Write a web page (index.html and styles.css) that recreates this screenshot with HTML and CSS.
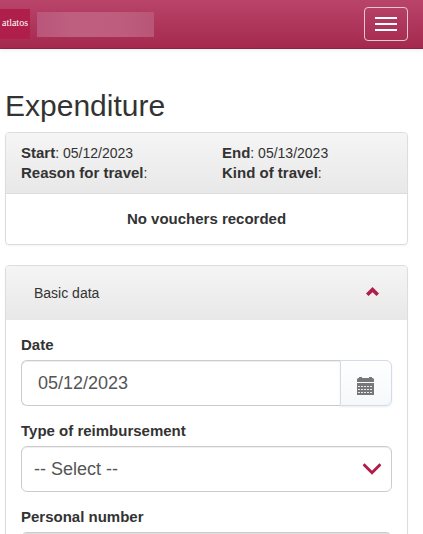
FILE: index.html
```html
<!DOCTYPE html>
<html lang="en">
<head>
<meta charset="utf-8">
<meta name="viewport" content="width=device-width, initial-scale=1">
<title>Expenditure</title>
<link rel="stylesheet" href="styles.css">
</head>
<body>
<header class="navbar">
  <a class="brand" href="#">atlatos</a>
  <span class="client"></span>
  <button class="toggle" type="button" aria-label="Menu"><span class="bar"></span><span class="bar"></span><span class="bar"></span></button>
</header>
<main class="content">
  <h1 class="title">Expenditure</h1>
  <section class="panel">
    <div class="panel-head summary">
      <div><strong>Start</strong>: 05/12/2023</div>
      <div><strong>End</strong>: 05/13/2023</div>
      <div><strong>Reason for travel</strong>:</div>
      <div><strong>Kind of travel</strong>:</div>
    </div>
    <p class="empty">No vouchers recorded</p>
  </section>
  <section class="panel">
    <button class="panel-head collapse" type="button">
      <span>Basic data</span>
      <svg class="chevron-up" viewBox="0 0 14 12" aria-hidden="true"><path d="M0 6.500 6.500 0 13 6.500 10.500 9 6.500 5.200 2.500 9z"/></svg>
    </button>
    <form class="form">
      <div class="field">
        <label for="date">Date</label>
        <div class="input-group">
          <input class="control date" id="date" type="text" value="05/12/2023">
          <button class="addon" type="button" aria-label="Choose date">
            <svg class="calendar" viewBox="0 0 17 18" aria-hidden="true">
              <path d="M0 5V2.500Q0 1 1.500 1H2V0h3v1h7V0h3v1h.5Q17 1 17 2.500V5zM0 6h17v12H0z"/>
              <path class="grid" d="M1 9.500h15M1 12.500h15M1 15.500h15"/>
            </svg>
          </button>
        </div>
      </div>
      <div class="field">
        <label for="type">Type of reimbursement</label>
        <div class="select-wrap">
          <select class="control" id="type"><option>-- Select --</option></select>
          <svg class="chevron-down" viewBox="0 0 18 12" aria-hidden="true"><path d="M0.500 1.200 9 9.700l8.500-8.500"/></svg>
        </div>
      </div>
      <div class="field">
        <label for="number">Personal number</label>
        <input class="control" id="number" type="text" disabled>
      </div>
    </form>
  </section>
</main>
</body>
</html>
```
FILE: styles.css
```css
* { box-sizing: border-box; }

body {
  margin: 0;
  background: #fff;
  color: #333;
  font: 14px/20px "Liberation Sans", Arial, sans-serif;
}

strong,
label,
.empty {
  font-size: 15px;
  font-weight: 700;
}

.navbar {
  display: flex;
  align-items: center;
  height: 49px;
  padding-right: 15px;
  background: linear-gradient(#b9446a, #a5294e);
  border-bottom: 1px solid #922044;
  box-shadow: 0 1px 5px rgba(0, 0, 0, .08);
}

.brand {
  width: 30px;
  height: 30px;
  background: #b01e4b;
  color: #fff;
  font: 10px/28px "Liberation Serif", serif;
  text-align: center;
  text-decoration: none;
}

.client {
  width: 117px;
  height: 25px;
  margin-left: 7px;
  background: linear-gradient(90deg, #b9557a, #bf5f80 30%, #bf5d7f 70%, #b95678);
}

.toggle {
  display: grid;
  gap: 4px;
  margin-left: auto;
  width: 44px;
  height: 34px;
  padding: 0 10px;
  align-content: center;
  background: none;
  border: 1px solid #e6c8d2;
  border-radius: 4px;
}

.bar {
  height: 2px;
  background: #fff;
}

.content { padding: 40px 15px 20px 5px; }

.title {
  margin: 0 0 10px;
  font-size: 30px;
  font-weight: 400;
  line-height: 33px;
}

.panel {
  margin-bottom: 20px;
  border: 1px solid #ddd;
  border-radius: 4px;
  box-shadow: 0 1px 2px rgba(0, 0, 0, .05);
}

.panel-head {
  background: linear-gradient(#f5f5f5, #e8e8e8);
  border-radius: 3px 3px 0 0;
}

.summary {
  display: grid;
  grid-template-columns: 201px 1fr;
  padding: 10px 15px;
  border-bottom: 1px solid #ddd;
}

.empty {
  margin: 0;
  padding: 15px;
  text-align: center;
}

.collapse {
  display: flex;
  align-items: center;
  justify-content: space-between;
  width: 100%;
  padding: 17px 27px 17px 28px;
  border: 0;
  color: inherit;
  font: inherit;
}

.chevron-up {
  width: 14px;
  height: 12px;
  fill: #b01e4b;
}

.form { padding: 15px; }

.field { margin-bottom: 15px; }

label {
  display: block;
  margin-bottom: 5px;
}

.control {
  display: block;
  width: 100%;
  height: 46px;
  padding: 10px 12px;
  appearance: none;
  background: #fff;
  border: 1px solid #ccc;
  border-radius: 6px;
  box-shadow: inset 0 1px 1px rgba(0, 0, 0, .075);
  color: #555;
  font: 18px/24px "Liberation Sans", Arial, sans-serif;
}

.control:disabled { background: #eee; }

.input-group { display: flex; }

.date {
  flex: 1;
  min-width: 0;
  padding: 10px 16px;
  border-right: 0;
  border-radius: 6px 0 0 6px;
}

.addon {
  display: grid;
  place-items: center;
  width: 52px;
  padding: 6px 1px 0 0;
  background: linear-gradient(#fff, #f5f8fa);
  border: 1px solid #d3dbe9;
  border-radius: 0 6px 6px 0;
  box-shadow: 0 1px 2px rgba(0, 0, 0, .08);
}

.calendar {
  width: 17px;
  height: 18px;
  fill: #777;
}

.grid {
  stroke: #fff;
  stroke-width: 1;
  stroke-dasharray: 2 1;
  stroke-opacity: .85;
}

.select-wrap {
  display: grid;
  align-items: center;
}

.select-wrap > * { grid-area: 1 / 1; }

.chevron-down {
  justify-self: end;
  width: 18px;
  height: 12px;
  margin-right: 11px;
  fill: none;
  stroke: #b01e4b;
  stroke-width: 3;
  pointer-events: none;
}
```
